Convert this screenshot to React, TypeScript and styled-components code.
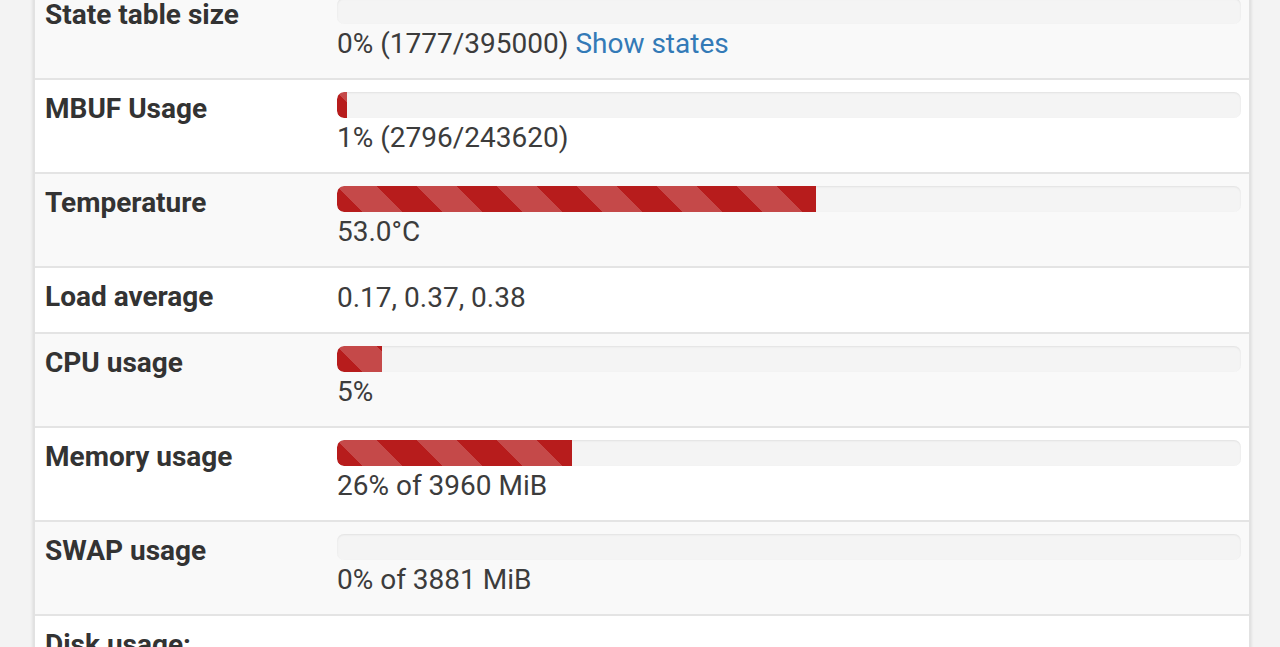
import styled, { createGlobalStyle } from "styled-components";

const GlobalStyle = createGlobalStyle`
    html, body {
        margin: 0;
        padding: 0;
        background: #f3f3f3;
        font-family: Roboto, "Liberation Sans", Arial, sans-serif;
        overflow: hidden;
    }
`;

const Page = styled.div`
    padding: 0 29px 0 33px;
    margin-top: -16px;
`;

const Panel = styled.div`
    background: #ffffff;
    border-left: 2px solid #e2e2e2;
    border-right: 2px solid #e2e2e2;
    box-shadow: 0 0 3px rgba(0, 0, 0, 0.12);
`;

const Row = styled.div<{ $striped?: boolean }>`
    display: grid;
    grid-template-columns: 292px 1fr;
    border-top: 2px solid #e4e4e4;
    background: ${(p) => (p.$striped ? "#f9f9f9" : "#ffffff")};
`;

const Label = styled.div`
    padding: 9px 10px 16px 10px;
    font-size: 28px;
    line-height: 39px;
    font-weight: 700;
    color: #333333;
`;

const Value = styled.div`
    padding: 10px 8px 15px 10px;
    font-size: 28px;
    line-height: 39px;
    color: #3c3c3c;
`;

const Track = styled.div`
    height: 26px;
    margin-top: 2px;
    border-radius: 7px;
    background: #f4f4f4;
    box-shadow: inset 0 1px 2px rgba(0, 0, 0, 0.08);
    overflow: hidden;
`;

const Fill = styled.div`
    height: 100%;
    border-radius: 7px 0 0 7px;
    background-color: #b71c1c;
    background-image: linear-gradient(
        45deg,
        rgba(255, 255, 255, 0.2) 25%,
        transparent 25%,
        transparent 50%,
        rgba(255, 255, 255, 0.2) 50%,
        rgba(255, 255, 255, 0.2) 75%,
        transparent 75%,
        transparent
    );
    background-size: 80px 80px;
`;

const Link = styled.a`
    color: #337ab7;
    text-decoration: none;
`;

type Item = {
    label: string;
    percent?: number;
    text: string;
    link?: string;
};

const items: Item[] = [
    { label: "State table size", percent: 0, text: "0% (1777/395000)", link: "Show states" },
    { label: "MBUF Usage", percent: 1.1, text: "1% (2796/243620)" },
    { label: "Temperature", percent: 53, text: "53.0°C" },
    { label: "Load average", text: "0.17, 0.37, 0.38" },
    { label: "CPU usage", percent: 5, text: "5%" },
    { label: "Memory usage", percent: 26, text: "26% of 3960 MiB" },
    { label: "SWAP usage", percent: 0, text: "0% of 3881 MiB" },
    { label: "Disk usage:", text: "" },
];

export default function App() {
    return (
        <>
            <GlobalStyle />
            <Page>
                <Panel>
                    {items.map((item, index) => (
                        <Row key={item.label} $striped={index % 2 === 0}>
                            <Label>{item.label}</Label>
                            <Value>
                                {item.percent !== undefined && (
                                    <Track>
                                        {item.percent > 0 && <Fill style={{ width: `${item.percent}%` }} />}
                                    </Track>
                                )}
                                {item.text}
                                {item.link && <> <Link href="#">{item.link}</Link></>}
                            </Value>
                        </Row>
                    ))}
                </Panel>
            </Page>
        </>
    );
}
